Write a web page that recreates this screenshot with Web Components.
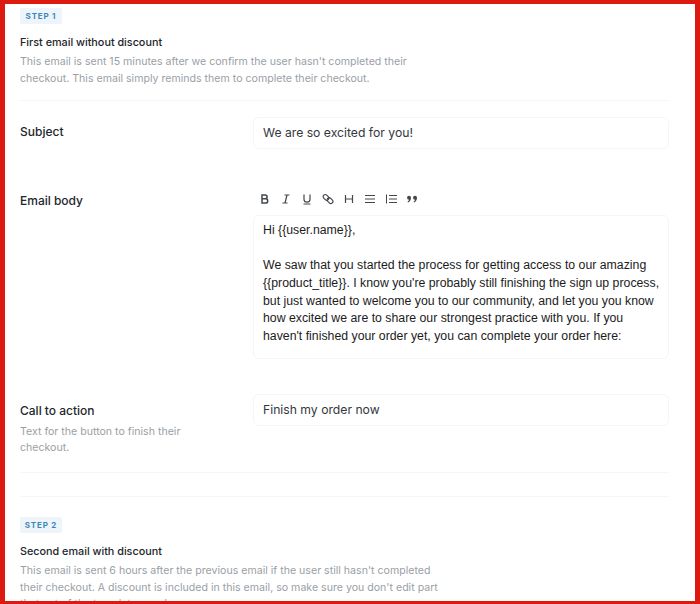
<!DOCTYPE html>
<html>
<head>
<meta charset="utf-8">
<style>
html, body { margin: 0; padding: 0; background: #fff; }
body { width: 700px; height: 604px; overflow: hidden; }
rich-editor p { margin: 0 0 17.67px 0; }
</style>
</head>
<body>
<email-flow>
  <step-intro step="STEP 1" heading="First email without discount">This email is sent 15 minutes after we confirm the user hasn't completed their<br>checkout. This email simply reminds them to complete their checkout.</step-intro>
  <form-row label="Subject" style="--row-top: 16px; --row-height: 74px; --label-top: 6px"><text-field>We are so excited for you!</text-field></form-row>
  <form-row label="Email body" style="--row-top: 0px; --row-height: 203px; --label-top: 1px">
    <rich-editor>
      <p>Hi {{user.name}},</p>
      <p>We saw that you started the process for getting access to our amazing {{product_title}}. I know you're probably still finishing the sign up process, but just wanted to welcome you to our community, and let you you know how excited we are to share our strongest practice with you. If you haven't finished your order yet, you can complete your order here:</p>
    </rich-editor>
  </form-row>
  <form-row class="last" label="Call to action" hint="Text for the button to finish their checkout." style="--row-top: 0; --row-height: 78px; --label-top: 8px"><text-field>Finish my order now</text-field></form-row>
  <step-intro step="STEP 2" heading="Second email with discount" class="second">This email is sent 6 hours after the previous email if the user still hasn't completed<br>their checkout. A discount is included in this email, so make sure you don't edit part<br>that out of the template copy!</step-intro>
</email-flow>

<script>
class EmailFlow extends HTMLElement {
  constructor() {
    super();
    this.attachShadow( {mode: 'open'} ).innerHTML = `
    <style>
    :host {
      border: solid #dd1a10;
      border-width: 4px 5px 3px 5px;
      box-sizing: border-box;
      color: #22262b;
      display: block;
      font-family: Inter, 'Liberation Sans', sans-serif;
      height: 604px;
      overflow: hidden;
      padding: 4px 0 0 15px;
      width: 700px;
    }
    </style>
    <slot></slot>
    `;
  }
}

class StepIntro extends HTMLElement {
  constructor() {
    super();
    const root = this.attachShadow( {mode: 'open'} );
    root.innerHTML = `
    <style>
    :host {
      display: block;
      width: 649px;
    }

    :host(.second) {
      border-top: solid 1px #f5f6f7;
      margin-top: 23px;
      padding-top: 20px;
    }

    span.step {
      background: #edf5fb;
      border-radius: 2px;
      box-sizing: border-box;
      color: #3f86b8;
      display: block;
      font-size: 8px;
      font-weight: 700;
      height: 16px;
      letter-spacing: 0.8px;
      line-height: 16px;
      text-align: center;
      width: 42px;
    }

    h3 {
      color: #22262b;
      font-size: 10.8px;
      font-weight: 500;
      line-height: 16px;
      margin: 11px 0 3px 0;
    }

    p {
      color: #9aa0a6;
      font-size: 10.6px;
      line-height: 16.5px;
      margin: 0;
    }

    div.rule {
      border-bottom: solid 1px #f5f6f7;
      height: 13px;
    }

    :host(.second) div.rule {
      display: none;
    }
    </style>
    <span class="step"></span>
    <h3></h3>
    <p><slot></slot></p>
    <div class="rule"></div>
    `;
    root.querySelector( 'span.step' ).textContent = this.getAttribute( 'step' );
    root.querySelector( 'h3' ).textContent = this.getAttribute( 'heading' );
  }
}

class FormRow extends HTMLElement {
  constructor() {
    super();
    const root = this.attachShadow( {mode: 'open'} );
    root.innerHTML = `
    <style>
    :host {
      display: grid;
      grid-template-columns: 233px 416px;
      height: var( --row-height );
      padding-top: var( --row-top );
      width: 649px;
    }

    :host(.last) {
      border-bottom: solid 1px #f5f6f7;
    }

    div.label {
      padding-top: var( --label-top, 7px );
    }

    h4 {
      color: #22262b;
      font-size: 12px;
      font-weight: 500;
      line-height: 18px;
      margin: 0;
    }

    p {
      color: #9aa0a6;
      font-size: 10.6px;
      line-height: 16px;
      margin: 4px 0 0 0;
      width: 175px;
    }

    p:empty {
      display: none;
    }
    </style>
    <div class="label"><h4></h4><p></p></div>
    <div><slot></slot></div>
    `;
    root.querySelector( 'h4' ).textContent = this.getAttribute( 'label' );
    root.querySelector( 'p' ).textContent = this.getAttribute( 'hint' ) || '';
  }
}

class TextField extends HTMLElement {
  constructor() {
    super();
    this.attachShadow( {mode: 'open'} ).innerHTML = `
    <style>
    :host {
      border: solid 1px #f4f5f6;
      border-radius: 6px;
      box-sizing: border-box;
      color: #33373c;
      display: block;
      font-size: 12.2px;
      height: 32px;
      line-height: 30px;
      padding: 0 9px;
    }
    </style>
    <slot></slot>
    `;
  }
}

class RichEditor extends HTMLElement {
  constructor() {
    super();
    this.attachShadow( {mode: 'open'} ).innerHTML = `
    <style>
    :host {
      display: block;
    }

    div.bar {
      align-items: center;
      color: #44484d;
      display: flex;
      gap: 9px;
      height: 16px;
      margin-bottom: 8px;
      padding-left: 6px;
    }

    svg {
      display: block;
      fill: none;
      height: 12px;
      stroke: currentColor;
      stroke-width: 1.2;
      width: 12px;
    }

    div.body {
      border: solid 1px #f4f5f6;
      border-radius: 6px;
      box-sizing: border-box;
      color: #1c1c1c;
      font-family: 'Liberation Sans', Arial, sans-serif;
      font-size: 12.3px;
      height: 144px;
      line-height: 17.67px;
      padding: 6px 6px 0 9px;
    }
    </style>
    <div class="bar">
      <svg viewBox="0 0 12 12"><path stroke-width="1.5" d="M3 2h3.200a1.900 1.900 0 0 1 0 3.800H3zM3 5.800h3.600a2.100 2.100 0 0 1 0 4.200H3z"/></svg>
      <svg viewBox="0 0 12 12"><path d="M4.500 2h5M2.500 10h5M7 2 5 10"/></svg>
      <svg viewBox="0 0 12 12"><path d="M3 1.500v4.700a3 3 0 0 0 6 0V1.500M2.500 11h7"/></svg>
      <svg viewBox="0 0 12 12"><rect x="0.800" y="2.300" width="6.400" height="4.200" rx="2.100" transform="rotate(45 4 4.400)"/><rect x="4.800" y="5.500" width="6.400" height="4.200" rx="2.100" transform="rotate(45 8 7.600)"/></svg>
      <svg viewBox="0 0 12 12"><path d="M2.500 2v8M9.500 2v8M2.500 6h7"/></svg>
      <svg viewBox="0 0 12 12"><path stroke-width="1" d="M1 2.500h10M1 6h10M1 9.500h10"/></svg>
      <svg viewBox="0 0 12 12"><path stroke-width="1" d="M4 2.500h8M4 6h8M4 9.500h8M1.500 1.500v9"/></svg>
      <svg viewBox="0 0 12 12"><path fill="currentColor" stroke="none" d="M3 2.800a2 2 0 0 1 2 2c0 2.200-1 3.800-3 4.700l-.5-.8c.9-.5 1.400-1.200 1.600-1.900A2 2 0 1 1 3 2.800zM9 2.800a2 2 0 0 1 2 2c0 2.200-1 3.800-3 4.700l-.5-.8c.9-.5 1.400-1.200 1.600-1.900A2 2 0 1 1 9 2.800z"/></svg>
    </div>
    <div class="body"><slot></slot></div>
    `;
  }
}

window.customElements.define( 'email-flow', EmailFlow );
window.customElements.define( 'step-intro', StepIntro );
window.customElements.define( 'form-row', FormRow );
window.customElements.define( 'text-field', TextField );
window.customElements.define( 'rich-editor', RichEditor );
</script>
</body>
</html>
